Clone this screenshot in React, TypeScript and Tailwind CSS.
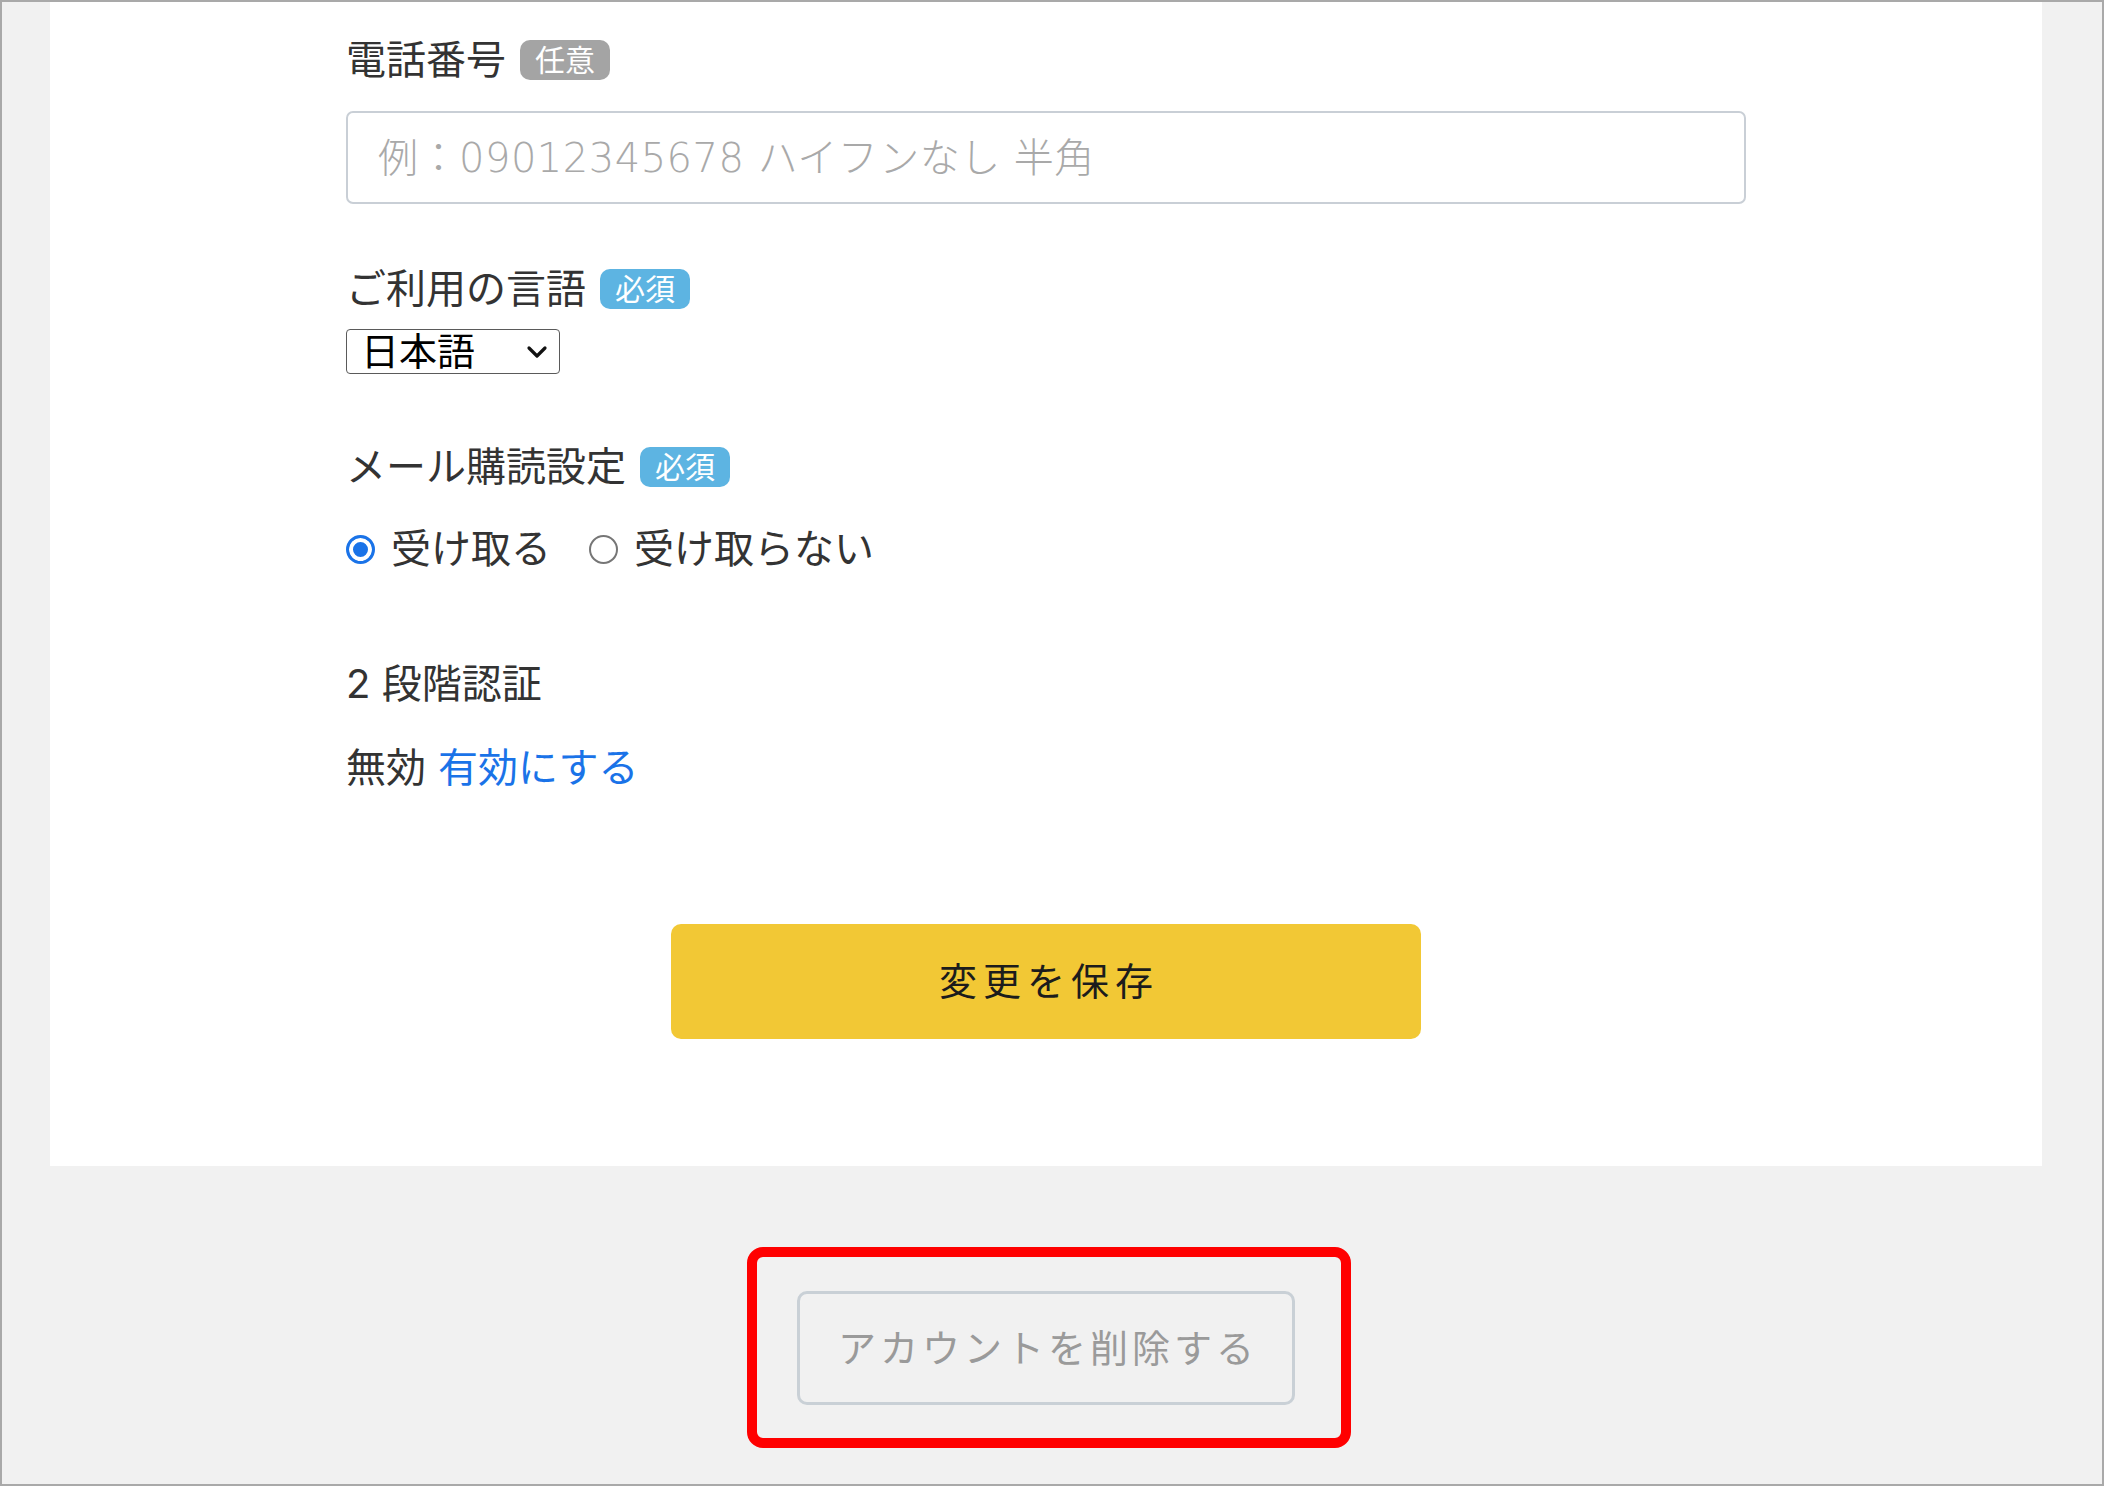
import { useState } from 'react';

const Badge = ({ label, tone }: { label: string; tone: 'gray' | 'blue' }) => (
  <span
    className={
      tone === 'gray'
        ? 'rounded-[10px] bg-[#a4a4a4] px-[15px] text-[30px] leading-[40px] text-white'
        : 'rounded-[10px] bg-[#5db4e2] px-[15px] text-[30px] leading-[40px] text-white'
    }
  >
    {label}
  </span>
);

const Label = ({ children }: { children: React.ReactNode }) => (
  <div className="flex h-[56px] items-center gap-[14px] text-[40px] text-[#333]">
    {children}
  </div>
);

const Radio = ({
  checked,
  label,
  onSelect,
}: {
  checked: boolean;
  label: string;
  onSelect: () => void;
}) => (
  <label className="flex cursor-pointer items-center gap-[16px]">
    <input
      type="radio"
      name="mail"
      checked={checked}
      onChange={onSelect}
      className="h-[29px] w-[29px] appearance-none rounded-full border-2 border-[#767676] bg-white checked:border-[3px] checked:border-[#1a73e8] checked:bg-[#1a73e8] checked:shadow-[inset_0_0_0_4px_white]"
    />
    <span>{label}</span>
  </label>
);

function App() {
  const [mail, setMail] = useState('yes');
  const [lang, setLang] = useState('ja');

  return (
    <div
      className="flex h-[1486px] w-full flex-col border-2 border-[#a9a9a9] bg-[#f1f1f1] text-[#333]"
      style={{ fontFamily: 'Inter, "Noto Sans CJK JP", "Noto Sans", sans-serif' }}
    >
      <div className="ml-[48px] mr-[60px] bg-white pb-[127px] pt-[30px]">
        <div className="mx-auto flex w-[1400px] flex-col">
          <Label>
            電話番号 <Badge label="任意" tone="gray" />
          </Label>
          <input
            type="tel"
            placeholder="例：09012345678 ハイフンなし 半角"
            className="mt-[23px] h-[93px] w-full rounded-[7px] border-2 border-[#c9cfd6] px-[30px] font-['DejaVu_Sans','Noto_Sans_CJK_JP',sans-serif] text-[40px] font-light tracking-[0.5px] outline-none placeholder:text-[#a9a9a9]"
          />

          <div className="mt-[57px]">
            <Label>
              ご利用の言語 <Badge label="必須" tone="blue" />
            </Label>
          </div>
          <div className="relative mt-[12px] h-[45px] w-[214px]">
            <select
              value={lang}
              onChange={(e) => setLang(e.currentTarget.value)}
              className="h-full w-full appearance-none rounded-[4px] border-[1.5px] border-[#5a5a5a] bg-white pl-[14px] text-[38px] leading-[41px] text-black outline-none"
            >
              <option value="ja">日本語</option>
              <option value="en">English</option>
            </select>
            <svg
              className="pointer-events-none absolute right-[12px] top-[16px]"
              width="22"
              height="14"
              viewBox="0 0 22 14"
              fill="none"
            >
              <path d="M3 3l8 8 8-8" stroke="#111" strokeWidth="3.2" strokeLinecap="round" strokeLinejoin="round" />
            </svg>
          </div>

          <div className="mt-[65px]">
            <Label>
              メール購読設定 <Badge label="必須" tone="blue" />
            </Label>
          </div>
          <div className="mt-[26px] flex h-[56px] items-center gap-[38px] text-[40px]">
            <Radio checked={mail === 'yes'} label="受け取る" onSelect={() => setMail('yes')} />
            <Radio checked={mail === 'no'} label="受け取らない" onSelect={() => setMail('no')} />
          </div>

          <div className="mt-[79px]">
            <Label>2 段階認証</Label>
          </div>
          <div className="mt-[28px] flex h-[56px] items-center gap-[12px] text-[40px]">
            <span>無効</span>
            <a href="#" className="text-[#1a73e8]">
              有効にする
            </a>
          </div>

          <button className="mx-auto mt-[128px] h-[115px] w-[750px] rounded-[10px] bg-[#f2c835] pl-[6px] text-[38px] tracking-[6px] text-[#1c1c1c]">
            変更を保存
          </button>
        </div>
      </div>

      <div className="ml-[48px] mr-[54px] mt-[81px] flex justify-center">
        <div className="rounded-[16px] border-[10px] border-[#ff0000] pb-[33px] pl-[40px] pr-[46px] pt-[34px]">
          <button className="h-[114px] w-[498px] rounded-[10px] border-[3px] border-[#c9d0d6] bg-[#f1f1f1] pl-[4px] text-[38px] tracking-[4px] text-[#9a9a9a]">
            アカウントを削除する
          </button>
        </div>
      </div>
    </div>
  );
}

export default App;
